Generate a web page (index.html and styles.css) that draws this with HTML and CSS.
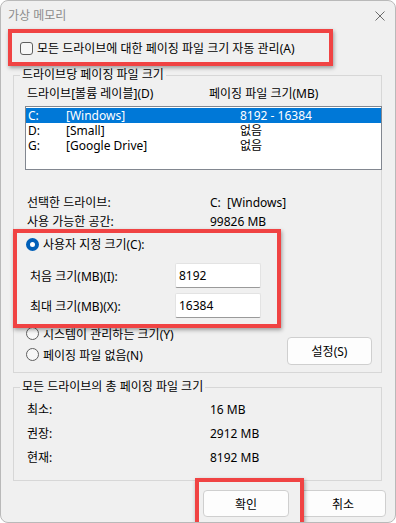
FILE: index.html
```html
<!DOCTYPE html>
<html lang="ko">
<head>
    <meta charset="UTF-8">
    <meta name="viewport" content="width=device-width, initial-scale=1.0">
    <title>가상 메모리</title>
    <link rel="stylesheet" href="styles.css">
</head>
<body>
    <div class="window">
        <div class="titlebar">
            <span class="title">가상 메모리</span>
            <svg class="close" width="10" height="10" viewBox="0 0 10 10">
                <path d="M0.5 0.5 L9.5 9.5 M9.5 0.5 L0.5 9.5" stroke="#6b6b6b" stroke-width="1" fill="none"/>
            </svg>
        </div>

        <div class="content">
            <label class="auto-row">
                <span class="checkbox"></span>
                모든 드라이브에 대한 페이징 파일 크기 자동 관리(A)
            </label>

            <fieldset class="group">
                <legend>드라이브당 페이징 파일 크기</legend>

                <div class="list-header">
                    <span>드라이브[볼륨 레이블](D)</span>
                    <span>페이징 파일 크기(MB)</span>
                </div>

                <div class="listbox">
                    <div class="list-row selected">
                        <span>C:</span><span>[Windows]</span><span>8192 - 16384</span>
                    </div>
                    <div class="list-row">
                        <span>D:</span><span>[Small]</span><span>없음</span>
                    </div>
                    <div class="list-row">
                        <span>G:</span><span>[Google Drive]</span><span>없음</span>
                    </div>
                </div>

                <div class="info">
                    <span>선택한 드라이브:</span><span class="keep">C:  [Windows]</span>
                    <span>사용 가능한 공간:</span><span>99826 MB</span>
                </div>

                <div class="radio-row first">
                    <span class="radio checked"></span>
                    사용자 지정 크기(C):
                </div>

                <div class="size-row first">
                    <span class="size-label">처음 크기(MB)(I):</span>
                    <span class="input">8192</span>
                </div>
                <div class="size-row">
                    <span class="size-label">최대 크기(MB)(X):</span>
                    <span class="input">16384</span>
                </div>

                <div class="options">
                    <div class="option-list">
                        <div class="radio-row">
                            <span class="radio"></span>
                            시스템이 관리하는 크기(Y)
                        </div>
                        <div class="radio-row">
                            <span class="radio"></span>
                            페이징 파일 없음(N)
                        </div>
                    </div>
                    <button class="button set-button">설정(S)</button>
                </div>
            </fieldset>

            <fieldset class="group total">
                <legend>모든 드라이브의 총 페이징 파일 크기</legend>
                <div class="totals">
                    <span>최소:</span><span>16 MB</span>
                    <span>권장:</span><span>2912 MB</span>
                    <span>현재:</span><span>8192 MB</span>
                </div>
            </fieldset>

            <div class="actions">
                <button class="button">확인</button>
                <button class="button">취소</button>
            </div>
        </div>

        <!-- annotation boxes drawn over the dialog -->
        <div class="mark mark-auto"></div>
        <div class="mark mark-custom"></div>
        <div class="mark mark-ok"></div>
    </div>
</body>
</html>
```

FILE: styles.css
```css
:root {
    --window-bg: #f0f0f0;
    --text-color: #000000;
    --group-border: #d7d7d7;
    --control-border: #cfcfcf;
    --select-color: #0078d7;
    --accent: #005fb8;
    --mark-color: #f04343;
}

* {
    box-sizing: border-box;
}

body {
    margin: 0;
    background: #ffffff;
    font-family: "Noto Sans", "Noto Sans CJK KR", sans-serif;
    font-size: 12px;
    color: var(--text-color);
}

.window {
    position: relative;
    width: 396px;
    height: 523px;
    background: var(--window-bg);
    border: 1px solid #b9b9b9;
    border-radius: 8px;
    overflow: hidden;
}

.titlebar {
    height: 30px;
    display: flex;
    align-items: center;
    justify-content: space-between;
    padding: 0 10px 0 7px;
}

.title {
    color: #8c8c8c;
    line-height: 30px;
}

.close {
    display: block;
}

.content {
    padding: 0 13px 0 12px;
}

.auto-row {
    display: flex;
    align-items: center;
    height: 34px;
    padding-left: 7px;
    gap: 4px;
    white-space: nowrap;
}

.checkbox {
    width: 13px;
    height: 13px;
    border: 1px solid #5f5f5f;
    border-radius: 3px;
    background: #f7f7f7;
    flex: none;
}

.group {
    margin: 3px 0 0;
    padding: 0 0 7px 11px;
    border: 1px solid var(--group-border);
    min-inline-size: 0;
}

.group legend {
    line-height: 14px;
    padding: 0 2px;
    margin-left: -5px;
}

.list-header {
    display: grid;
    grid-template-columns: 182px 1fr;
    height: 20px;
    line-height: 20px;
    margin-top: 2px;
    padding-left: 2px;
}

.listbox {
    margin-top: 2px;
    margin-right: -1px;
    height: 64px;
    background: #ffffff;
    border: 1px solid #828790;
    padding-top: 1px;
}

.list-row {
    display: grid;
    grid-template-columns: 38px 174px 1fr;
    height: 15px;
    line-height: 15px;
    padding-left: 2px;
    white-space: nowrap;
}

.list-row.selected {
    background: var(--select-color);
    color: #ffffff;
}

.info {
    display: grid;
    grid-template-columns: 183px 1fr;
    grid-auto-rows: 19px;
    line-height: 19px;
    margin-top: 23px;
    padding-left: 2px;
}

.keep {
    white-space: pre;
}

.radio-row {
    display: flex;
    align-items: center;
    gap: 4px;
    height: 21px;
    padding-left: 1px;
    white-space: nowrap;
}

.radio-row.first {
    height: 20px;
    margin-top: 3px;
}

.radio {
    width: 13px;
    height: 13px;
    border: 1px solid #5f5f5f;
    border-radius: 50%;
    background: #f7f7f7;
    flex: none;
}

.radio.checked {
    border: 4px solid var(--accent);
    background: #ffffff;
}

.size-row {
    display: flex;
    align-items: center;
    height: 25px;
    margin-top: 5px;
}

.size-row.first {
    margin-top: 9px;
}

.size-label {
    width: 150px;
    padding-left: 5px;
}

.input {
    width: 86px;
    height: 25px;
    line-height: 23px;
    padding-left: 3px;
    background: #ffffff;
    border: 1px solid #e3e3e3;
    border-bottom-color: #9a9a9a;
    border-radius: 2px;
}

.options {
    display: flex;
    justify-content: space-between;
    align-items: flex-end;
    margin-top: 5px;
    padding-right: 9px;
}

.button {
    font: inherit;
    color: var(--text-color);
    width: 86px;
    height: 27px;
    padding: 0;
    background: #fdfdfd;
    border: 1px solid var(--control-border);
    border-radius: 4px;
}

.set-button {
    width: 85px;
    height: 28px;
}

.group.total {
    margin-top: 7px;
    padding-bottom: 10px;
}

.totals {
    display: grid;
    grid-template-columns: 183px 1fr;
    grid-auto-rows: 24px;
    line-height: 24px;
    margin-top: 4px;
    padding-left: 2px;
}

.actions {
    display: flex;
    justify-content: flex-end;
    gap: 11px;
    margin-top: 9px;
    margin-right: -4px;
}

.mark {
    position: absolute;
    border: 4px solid var(--mark-color);
    box-shadow: 1px 2px 4px rgba(0, 0, 0, 0.35);
}

.mark-auto {
    left: 7px;
    top: 28px;
    width: 325px;
    height: 37px;
}

.mark-custom {
    left: 12px;
    top: 228px;
    width: 268px;
    height: 99px;
}

.mark-ok {
    left: 194px;
    top: 477px;
    width: 109px;
    height: 60px;
}
```
